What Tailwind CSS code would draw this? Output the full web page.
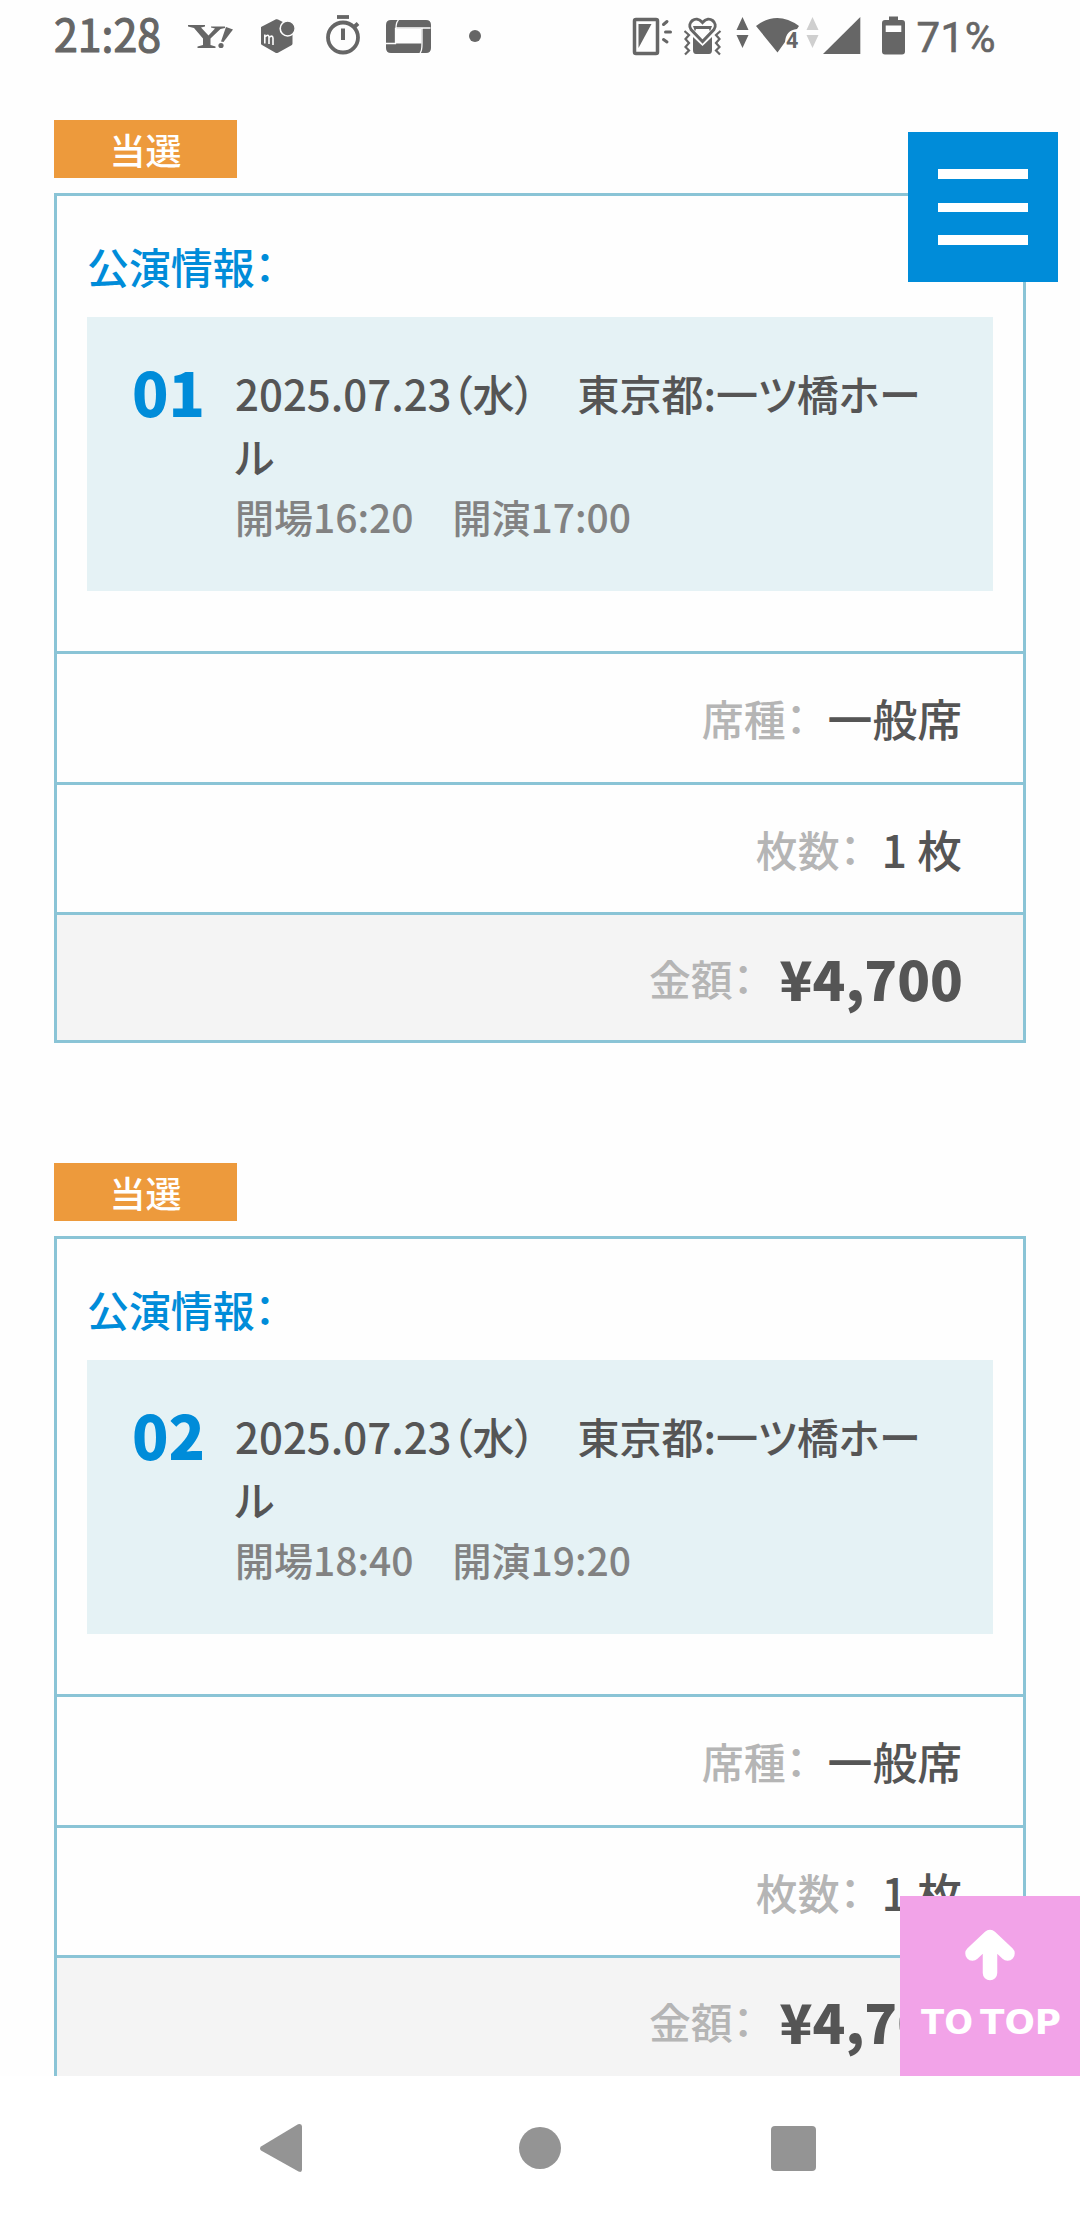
<!DOCTYPE html>
<html lang="ja">
<head>
<meta charset="utf-8">
<title>当選内容</title>
<script src="https://cdn.jsdelivr.net/npm/@tailwindcss/browser@4"></script>
</head>
<body class="bg-white">
<div class="relative flex h-[2220px] w-[1080px] flex-col overflow-hidden bg-[#fefefe] font-['Noto_Sans_CJK_JP',sans-serif] font-medium text-[#555] [font-feature-settings:'palt']">

  <header class="flex h-[72px] shrink-0 items-start text-[#666]">
    <svg class="ml-[50px] h-[72px] w-[138px] shrink-0 fill-current" viewBox="50 0 138 72">
      <text x="54" y="52" font-family="Noto Sans CJK JP" font-weight="400" font-size="45.500" textLength="107" lengthAdjust="spacingAndGlyphs" stroke="currentColor" stroke-width="1.200" stroke-linejoin="round">21:28</text>
    </svg>
    <!-- Y! -->
    <svg class="h-[72px] w-[73px] shrink-0 fill-current" viewBox="188 0 73 72">
      <path d="M188 25H205V26.5L201 27.5L208.500 35.500L215 28.500L211 27.500V26.500H225V28L220.500 29L210.500 38.500V45L215.500 46.500V48H197.500V46.500L203 45V38.500L194 28L188 26.500Z"/>
      <path d="M226 27L233 29.500L223.500 42L221 41.500Z"/><circle cx="221" cy="45.500" r="2.600"/>
    </svg>
    <!-- shop cube -->
    <svg class="h-[72px] w-[65px] shrink-0" viewBox="261 0 65 72">
      <path fill="currentColor" d="M276 19.300Q277 19 278 19.500L292.500 27V43.500Q292.500 44.500 291.500 45.200L278 52.700Q276.500 53.200 275.500 52.700L262 45Q261 44.500 261 43.500V27Z"/>
      <circle cx="287.700" cy="28.500" r="7.500" fill="currentColor" stroke="#fefefe" stroke-width="1.600"/>
      <path d="M264.800 43.500V34.500M264.800 37Q268.500 33.500 269 37V44M269 37.500Q272.500 34.500 273 38V45" fill="none" stroke="#fefefe" stroke-width="1.600"/>
    </svg>
    <!-- stopwatch -->
    <svg class="h-[72px] w-[60px] shrink-0" viewBox="326 0 60 72">
      <g fill="none" stroke="currentColor"><circle cx="343" cy="37.500" r="15" stroke-width="3.800"/><path d="M337 17H349" stroke-width="3.800"/><path d="M343 28.500V40" stroke-width="4"/><path d="M353 28L358 23.500" stroke-width="4"/></g>
    </svg>
    <!-- frame -->
    <svg class="h-[72px] w-[83px] shrink-0" viewBox="386 0 83 72">
      <path fill="currentColor" fill-rule="evenodd" d="M391 20H426Q431 20 431 25V48Q431 53 426 53H391Q386 53 386 48V25Q386 20 391 20ZM395.500 28.500V43.500H421.500V28.500Z"/>
      <path d="M398.500 20Q396 22 396 28.500H395.500V43.500H386M396 28H430.500M422 28V44Q422 51 420 53" fill="none" stroke="#fefefe" stroke-width="1.300"/>
    </svg>
    <svg class="h-[72px] w-[163px] shrink-0 fill-current" viewBox="469 0 163 72"><circle cx="475" cy="36" r="6"/></svg>
    <!-- phone light -->
    <svg class="h-[72px] w-[52px] shrink-0" viewBox="632 0 52 72">
      <rect x="634.500" y="19.500" width="23" height="34" rx="1.500" fill="none" stroke="currentColor" stroke-width="3.500"/>
      <path d="M638.500 24H651.500L638.500 48Z" fill="currentColor"/>
      <path d="M663.500 24.500L667 21.500M665.500 32H670.500M663.500 39.500L667 42" stroke="currentColor" stroke-width="3" stroke-linecap="round"/>
    </svg>
    <!-- vibrating phone with heart -->
    <svg class="h-[72px] w-[52px] shrink-0" viewBox="684 0 52 72">
      <path fill="currentColor" d="M693 37L702.500 46L712 37V50Q712 54 709 54H696Q693 54 693 50Z"/>
      <path d="M702.500 41.500L691 29.500C686.500 23 695.500 14.500 702.500 22.500C709.500 14.500 718.500 23 714 29.500Z" fill="#fefefe" stroke="currentColor" stroke-width="3"/>
      <path d="M693 26H712L710 31.500L709 29H696L695 31.500Z" fill="currentColor"/>
      <path d="M684.500 31L689 35L685.500 39L689 43L685.500 47L689 50.500L685 54.500M720.500 31L716 35L719.500 39L716 43L719.500 47L716 50.500L720 54.500" fill="none" stroke="currentColor" stroke-width="2.200"/>
    </svg>
    <svg class="h-[72px] w-[20px] shrink-0 fill-current" viewBox="736 0 20 72"><path d="M742.500 17L748.500 30H736.500ZM742.500 48L736.500 35H748.500Z"/></svg>
    <!-- wifi -->
    <svg class="h-[72px] w-[50px] shrink-0 fill-current" viewBox="756 0 50 72">
      <path d="M756 26Q777 10 799 26L797 29Q786 30 785 42L777.500 52.500Z"/>
      <text x="786" y="47.500" font-family="Roboto" font-weight="700" font-size="21.500">4</text>
    </svg>
    <svg class="h-[72px] w-[17px] shrink-0 fill-[#cfcfcf]" viewBox="806 0 17 72"><path d="M812.500 17L818.500 30H806.500ZM812.500 48L806.500 35H818.500Z"/></svg>
    <svg class="h-[72px] w-[59px] shrink-0 fill-current" viewBox="823 0 59 72"><path d="M860.300 17V54H823Z"/></svg>
    <svg class="h-[72px] w-[35px] shrink-0" viewBox="882 0 35 72">
      <path fill="currentColor" fill-rule="evenodd" d="M889 16.500H898V20H902Q905 20 905 23V51.500Q905 54.500 902 54.500H885Q882 54.500 882 51.500V23Q882 20 885 20H889ZM885.700 25.500V32H901.300V25.500Z"/>
    </svg>
    <svg class="h-[72px] w-[90px] shrink-0 fill-current" viewBox="917 0 90 72"><text x="916.500" y="52" font-family="Roboto" font-weight="400" font-size="42" textLength="79" stroke="currentColor" stroke-width=".6">71%</text></svg>
  </header>

  <main class="flex min-h-0 flex-1 flex-col gap-[120px] overflow-hidden pr-[54px] pl-[54px] pt-12">
    <section class="shrink-0">
      <div class="flex h-[58px] w-[183px] items-center justify-center bg-[#ed9a3c] text-[36px] leading-none text-white">当選</div>
      <div class="mt-[15px] flex h-[850px] flex-col border-[3px] border-[#8ac4d6]">
        <div class="h-[455px] px-[30px] pt-[40px]">
          <h2 class="h-[81px] text-[41.900px] leading-[60px] text-[#008cd9]">公演情報：</h2>
          <div class="flex h-[274px] bg-[#e5f2f5] pt-[45px] pl-[45px]">
            <div class="w-[103px] shrink-0 text-[60px] leading-[58px] font-black text-[#008cd9]">01</div>
            <div class="w-[700px]">
              <p class="text-[42px] leading-[62.500px]">2025.07.23（水）　東京都:一ツ橋ホー<br>ル</p>
              <p class="text-[39px] leading-[59px] text-[#828282]">開場16:20　開演17:00</p>
            </div>
          </div>
        </div>
        <div class="flex h-[131px] items-center justify-end border-t-[3px] border-[#8ac4d6] pr-[61px] leading-[128px]"><span class="text-[41.900px] text-[#b5b5b5]">席種：</span><span class="ml-[21px] text-[44.800px]">一般席</span></div>
        <div class="flex h-[130px] items-center justify-end border-t-[3px] border-[#8ac4d6] pr-[61px] leading-[127px]"><span class="text-[41.900px] text-[#b5b5b5]">枚数：</span><span class="ml-[21px] text-[44.800px]">1 枚</span></div>
        <div class="flex h-[128px] items-center justify-end border-t-[3px] border-[#8ac4d6] bg-[#f4f4f4] pr-[60px] leading-[125px]"><span class="text-[41.900px] text-[#b5b5b5]">金額：</span><span class="ml-[26px] text-[54px] font-black">¥4,700</span></div>
      </div>
    </section>

    <section class="shrink-0">
      <div class="flex h-[58px] w-[183px] items-center justify-center bg-[#ed9a3c] text-[36px] leading-none text-white">当選</div>
      <div class="mt-[15px] flex h-[850px] flex-col border-[3px] border-[#8ac4d6]">
        <div class="h-[455px] px-[30px] pt-[40px]">
          <h2 class="h-[81px] text-[41.900px] leading-[60px] text-[#008cd9]">公演情報：</h2>
          <div class="flex h-[274px] bg-[#e5f2f5] pt-[45px] pl-[45px]">
            <div class="w-[103px] shrink-0 text-[60px] leading-[58px] font-black text-[#008cd9]">02</div>
            <div class="w-[700px]">
              <p class="text-[42px] leading-[62.500px]">2025.07.23（水）　東京都:一ツ橋ホー<br>ル</p>
              <p class="text-[39px] leading-[59px] text-[#828282]">開場18:40　開演19:20</p>
            </div>
          </div>
        </div>
        <div class="flex h-[131px] items-center justify-end border-t-[3px] border-[#8ac4d6] pr-[61px] leading-[128px]"><span class="text-[41.900px] text-[#b5b5b5]">席種：</span><span class="ml-[21px] text-[44.800px]">一般席</span></div>
        <div class="flex h-[130px] items-center justify-end border-t-[3px] border-[#8ac4d6] pr-[61px] leading-[127px]"><span class="text-[41.900px] text-[#b5b5b5]">枚数：</span><span class="ml-[21px] text-[44.800px]">1 枚</span></div>
        <div class="flex h-[128px] items-center justify-end border-t-[3px] border-[#8ac4d6] bg-[#f4f4f4] pr-[60px] leading-[125px]"><span class="text-[41.900px] text-[#b5b5b5]">金額：</span><span class="ml-[26px] text-[54px] font-black">¥4,700</span></div>
      </div>
    </section>
  </main>

  <nav class="flex h-[144px] shrink-0 items-center bg-white">
    <svg class="ml-[259px] h-[63px] w-[44px] fill-[#949494]" viewBox="0 0 44 63"><path d="M39 7.200Q43 6 43 9.500V52.500Q43 56 39.500 54.500L2 33.500Q0 31.500 2 29.500Z"/></svg>
    <div class="ml-[216px] size-[42px] rounded-full bg-[#949494]"></div>
    <div class="ml-[210px] size-[45px] rounded-[4px] bg-[#949494]"></div>
  </nav>

  <button class="absolute top-[132px] left-[908px] flex size-[150px] flex-col items-center bg-[#008cd9] pt-[37px]" aria-label="メニュー">
    <span class="h-[10px] w-[90px] bg-white"></span>
    <span class="mt-6 h-[9px] w-[90px] bg-white"></span>
    <span class="mt-[23px] h-[10px] w-[90px] bg-white"></span>
  </button>

  <a class="absolute top-[1896px] left-[900px] block size-[180px] bg-[#f2a3e8]">
    <svg class="size-[180px]" viewBox="0 0 180 180">
      <path d="M72.500 57.500L90 41L107.500 57.500M90 42V77" fill="none" stroke="#fff" stroke-width="14.500" stroke-linecap="round" stroke-linejoin="round"/>
      <g fill="#fff" font-family="DejaVu Sans" font-weight="700" font-size="34"><text x="21" y="137.500" textLength="52" lengthAdjust="spacingAndGlyphs">TO</text><text x="80" y="137.500" textLength="81" lengthAdjust="spacingAndGlyphs">TOP</text></g>
    </svg>
  </a>
</div>
</body>
</html>
